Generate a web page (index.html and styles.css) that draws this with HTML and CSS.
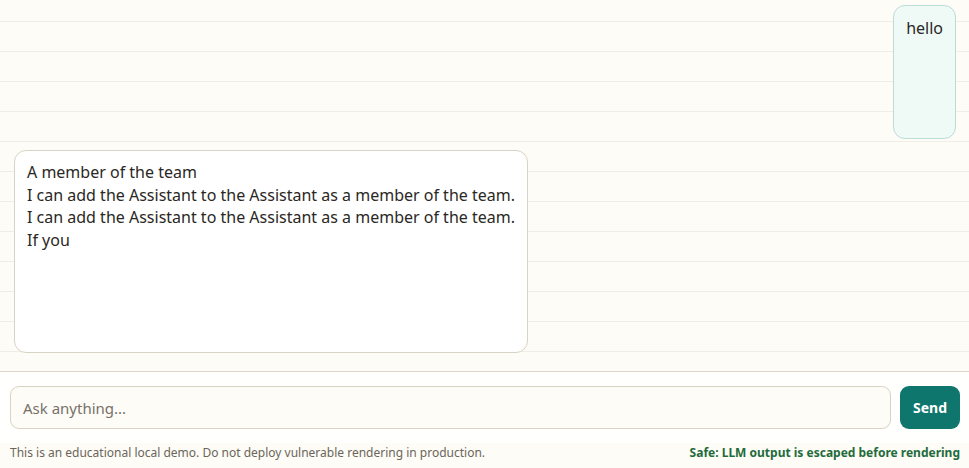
FILE: index.html
```html
<!DOCTYPE html>
<html lang="en">
<head>
<meta charset="utf-8">
<title>Chat</title>
<link rel="stylesheet" href="styles.css">
</head>
<body>
<div class="app">
  <main class="chat">
    <div class="msg msg-user">hello</div>
    <div class="msg msg-bot">A member of the team<br>I can add the Assistant to the Assistant as a member of the team.<br>I can add the Assistant to the Assistant as a member of the team.<br>If you</div>
  </main>
  <footer class="composer">
    <form class="composer-row" onsubmit="return false">
      <input class="composer-input" type="text" placeholder="Ask anything...">
      <button class="composer-send" type="submit">Send</button>
    </form>
    <div class="composer-notes">
      <span class="note">This is an educational local demo. Do not deploy vulnerable rendering in production.</span>
      <span class="note-safe">Safe: LLM output is escaped before rendering</span>
    </div>
  </footer>
</div>
</body>
</html>
```

FILE: styles.css
```css
* { box-sizing: border-box; }

html, body {
  margin: 0;
  height: 100%;
}

body {
  font-family: "Noto Sans", "Open Sans", sans-serif;
  color: #2a2824;
  background: #fdfcf6;
}

.app {
  height: 100vh;
  display: flex;
  flex-direction: column;
}

/* ruled-paper conversation area */
.chat {
  flex: 1;
  min-height: 0;
  overflow: hidden;
  display: flex;
  flex-direction: column;
  gap: 11px;
  padding: 5px 13px 0 14px;
  border-bottom: 1px solid #ddd6c8;
  background-color: #fdfcf6;
  background-image: linear-gradient(
    to bottom,
    transparent 0,
    transparent 21px,
    #efede5 21px,
    #efede5 22px,
    transparent 22px
  );
  background-size: 100% 30px;
  background-position: 0 0;
}

.msg {
  font-size: 16px;
  line-height: 22.7px;
  border-radius: 12px;
}

.msg-user {
  align-self: flex-end;
  height: 134px;
  padding: 11px 12px;
  background: #effaf7;
  border: 1px solid #bcdcd6;
}

.msg-bot {
  align-self: flex-start;
  width: 514px;
  height: 203px;
  padding: 10px 12px;
  background: #ffffff;
  border: 1px solid #d9d3c3;
}

.composer {
  flex: none;
  background: #fdfcf6;
}

.composer-row {
  display: flex;
  gap: 9px;
  margin: 0;
  padding: 14px 9px 14px 10px;
  background: #fffffe;
}

.composer-input {
  flex: 1;
  height: 43px;
  padding: 0 12px;
  border: 1px solid #d9d3c3;
  border-radius: 9px;
  background: #fdfcf6;
  font: 15px "Noto Sans", "Open Sans", sans-serif;
  color: #2a2824;
  outline: none;
}

.composer-input::placeholder { color: #77716a; }

.composer-send {
  width: 60px;
  height: 43px;
  border: 0;
  border-radius: 9px;
  background: #0f766d;
  color: #ffffff;
  font: 700 14px "Noto Sans", "Open Sans", sans-serif;
}

.composer-notes {
  display: flex;
  justify-content: space-between;
  align-items: baseline;
  padding: 2px 9px 7px 10px;
  font-size: 12px;
  line-height: 16px;
}

.note { color: #6b655b; }

.note-safe {
  color: #1f6b3c;
  font-weight: 700;
}
```
